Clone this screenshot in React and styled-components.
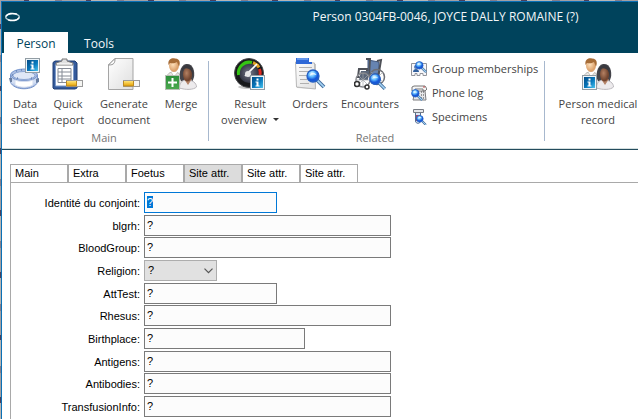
import React, { useEffect, useRef, useState } from "react";
import styled, { createGlobalStyle } from "styled-components";

const GlobalStyle = createGlobalStyle`
  * { box-sizing: border-box; }
  body { margin: 0; background: #9b9b9f; overflow: hidden; }
  button, input, select { font: inherit; color: inherit; margin: 0; }
`;

const Desktop = styled.div`
  display: flex;
  min-height: 100vh;
  padding: 1px 0 0 1px;
  background: repeating-linear-gradient(135deg, #a3a0a4 0 17px, #4c405b 17px 21px, #b8b5b4 21px 39px, #857e8c 39px 44px);
`;

const Window = styled.div`
  display: flex;
  flex-direction: column;
  flex: 1;
  min-width: 0;
  overflow: hidden;
  background: #fff;
  border: 1px solid #0a70b5;
  border-width: 1px 0 0 1px;
`;

const Header = styled.header`
  background: #00435c;
  color: #f3f7f9;
  font: 12px/16px "Open Sans", "Noto Sans", sans-serif;
`;

const TitleBar = styled.div`
  display: flex;
  align-items: center;
  height: 30px;
  padding-left: 2px;
`;

const Title = styled.h1`
  flex: 1;
  margin: 0;
  padding-left: 232px;
  font: inherit;
  text-align: center;
  white-space: nowrap;
`;

const RibbonTabs = styled.div`
  display: flex;
  height: 21px;
  padding-left: 2px;
`;

const RibbonTab = styled.button`
  width: ${(p) => (p.$active ? 64 : 62)}px;
  padding: 2px 0 0;
  border: 0;
  background: ${(p) => (p.$active ? "#fff" : "transparent")};
  color: ${(p) => (p.$active ? "#00435c" : "#f3f7f9")};
`;

const Ribbon = styled.div`
  display: flex;
  height: 97px;
  padding: 4px 0 0 2px;
  border-bottom: 1px solid #234c5d;
  box-shadow: inset 0 -1px #d5dfdf;
  background: #fff;
  color: #444;
  font: 11px/16px "Open Sans", "Noto Sans", sans-serif;
`;

const Group = styled.section`
  display: flex;
  flex: none;
  flex-direction: column;
`;

const Separator = styled.div`
  flex: none;
  width: 1px;
  height: 80px;
  margin-top: 4px;
  margin-left: ${(p) => p.$space}px;
  background: #a7b8ce;
`;

const GroupItems = styled.div`
  display: flex;
  height: 73px;
`;

const GroupLabel = styled.div`
  color: #747474;
  text-align: center;
`;

const LargeButton = styled.button`
  display: flex;
  flex-direction: column;
  align-items: center;
  flex: none;
  width: ${(p) => p.$width}px;
  padding: 1px 0 0;
  border: 0;
  background: transparent;
  white-space: nowrap;
  svg { flex: none; margin-bottom: 6px; }
`;

const ArrowLine = styled.span`
  display: flex;
  align-items: center;
  gap: 6px;
  svg { margin: 0; }
`;

const SmallButtons = styled.div`
  display: flex;
  flex-direction: column;
  width: 130px;
`;

const SmallButton = styled.button`
  display: flex;
  align-items: center;
  gap: 5px;
  height: 24px;
  padding: 0;
  border: 0;
  background: transparent;
  white-space: nowrap;
  svg { flex: none; }
`;

const Content = styled.main`
  display: flex;
  flex-direction: column;
  flex: 1;
  padding: 14px 0 0 8px;
  color: #000;
  font: 11px/13px "Liberation Sans", Arial, sans-serif;
`;

const PageTabs = styled.div`
  display: flex;
  height: 18px;
`;

const PageTab = styled.button`
  width: 58px;
  padding: 0 4px;
  border: 1px solid #a9a9a9;
  border-bottom: 0;
  background: ${(p) => (p.$selected ? "#dcdcdc" : "#fff")};
  text-align: left;
  white-space: nowrap;
`;

const Panel = styled.div`
  flex: 1;
  padding: 9px 0 0;
  border: 1px solid #a9a9a9;
  border-width: 1px 0 0 1px;
`;

const Form = styled.form`
  display: grid;
  grid-auto-rows: 23px 22px 23px;
`;

const Field = styled.div`
  display: flex;
  align-items: center;
  height: 21px;
`;

const Label = styled.label`
  flex: none;
  width: 129px;
  margin-right: 4px;
  padding-top: 2px;
  text-align: right;
  white-space: nowrap;
`;

const sizes = { short: 133, medium: 161, long: 247 };

const TextInput = styled.input`
  width: ${(p) => sizes[p.$size]}px;
  height: 21px;
  padding: 0 2px 2px;
  border: 1px solid #7a7a7a;
  border-radius: 0;
  outline: 0;
  background: #fcfcfc;
  &:focus { border-color: #0078d7; }
  &::selection { background: #0078d7; color: #fff; }
`;

const SelectBox = styled.div`
  display: grid;
  width: 73px;
  height: 21px;
  svg { grid-area: 1 / 1; place-self: center end; margin-right: 4px; pointer-events: none; }
`;

const Select = styled.select`
  grid-area: 1 / 1;
  appearance: none;
  padding: 0 3px;
  border: 1px solid #adadad;
  border-radius: 0;
  background: #e1e1e1;
`;

const Logo = () => (
  <svg width="17" height="12" viewBox="0 0 17 12" fill="none" aria-hidden="true">
    <ellipse cx="8.5" cy="6" rx="6.8" ry="3.3" stroke="#b8d0d9" strokeWidth="1.4" />
    <path d="M2 5.5C3.5 2 9 1.7 13 3.2M15 6.5c-1.5 3.5-7 3.8-11 2.3" stroke="#fff" strokeWidth="1.4" />
  </svg>
);

const Defs = () => (
  <svg width="0" height="0" aria-hidden="true" display="block">
    <defs>
      <linearGradient id="blue" x2="1" y2="1"><stop stopColor="#034b86" /><stop offset=".55" stopColor="#0879bd" /><stop offset="1" stopColor="#48c3ee" /></linearGradient>
      <linearGradient id="green" x2="0" y2="1"><stop stopColor="#2c8f3a" /><stop offset="1" stopColor="#4ba84e" /></linearGradient>
      <linearGradient id="paper" x2="1" y2="1"><stop stopColor="#fff" /><stop offset="1" stopColor="#dedede" /></linearGradient>
      <linearGradient id="gold" x2="0" y2="1"><stop stopColor="#ffe478" /><stop offset="1" stopColor="#e5a000" /></linearGradient>
      <linearGradient id="band" x2="0" y2="1"><stop stopColor="#9fb5df" /><stop offset=".5" stopColor="#dce6f8" /><stop offset="1" stopColor="#7f9bd0" /></linearGradient>
      <radialGradient id="lens" cx=".4" cy=".3"><stop stopColor="#e9faff" /><stop offset=".55" stopColor="#5bb8ff" /><stop offset="1" stopColor="#1759d8" /></radialGradient>
      <radialGradient id="skin" cx=".4" cy=".4"><stop stopColor="#ffe2bd" /><stop offset="1" stopColor="#dca26d" /></radialGradient>
      <radialGradient id="brown" cx=".4" cy=".4"><stop stopColor="#b48163" /><stop offset="1" stopColor="#734630" /></radialGradient>
      <radialGradient id="dial"><stop stopColor="#77798a" /><stop offset="1" stopColor="#303342" /></radialGradient>
    </defs>
  </svg>
);

const Picture = ({ children, size = 32 }) => (
  <svg width={size} height={size} viewBox={`0 0 ${size} ${size}`} fill="none" aria-hidden="true">{children}</svg>
);

const InfoMark = ({ x, y }) => (
  <g transform={`translate(${x} ${y})`}>
    <rect x=".5" y=".5" width="14" height="14" fill="#eef5f9" stroke="#929da4" />
    <rect x="2" y="2" width="11" height="11" fill="url(#blue)" />
    <path d="M6.5 3.5h2v2h-2zM5.5 6.5h3v4h1v1h-4v-1h1v-3h-1z" fill="#fff" />
  </g>
);

const Pencil = ({ x, y }) => (
  <g transform={`translate(${x} ${y})`}>
    <rect x=".5" y=".5" width="16" height="6" fill="#f5f5f2" stroke="#9a9a9a" />
    <rect x="1" y="1" width="9" height="5" fill="url(#gold)" />
    <path d="M.5 1v5h10V1" stroke="#bd8a22" />
  </g>
);

const Magnifier = ({ x, y, s = 1 }) => (
  <g transform={`translate(${x} ${y}) scale(${s})`}>
    <path d="m11 11 7 7" stroke="#4771a0" strokeWidth="3.8" />
    <path d="m11 11 7 7" stroke="#a5d5f5" strokeWidth="1.7" />
    <circle cx="7" cy="7" r="6" fill="url(#lens)" stroke="#245fc4" strokeWidth="1.3" />
    <path d="M3.5 7c1.5-4 5-4 7-1-3-1-5-.5-7 1z" fill="#f3fcff" opacity=".8" />
  </g>
);

const SheetIcon = () => (
  <Picture>
    <ellipse cx="15" cy="17" rx="13.5" ry="6" fill="#aabde2" stroke="#7797d0" />
    <path d="M1.5 17v7c3 9 24 9 27 0v-7c-3 8-24 8-27 0z" fill="url(#band)" stroke="#7895cb" />
    <ellipse cx="15" cy="17.5" rx="11" ry="4" fill="#dfe7f7" stroke="#8ba5d3" />
    <path d="M6 22c5 2 13 2 18 0v5c-5 3-13 3-18 0z" fill="#fff" stroke="#d4ddef" />
    <path d="M0 20h3v4H1zM27 21l3-1v4l-3 1z" fill="#687d9f" />
    <path d="M7 13h1M12 12h1M3 17h1M8 20h1M22 20h1" stroke="#4466a0" />
    <InfoMark x={16} y={0} />
  </Picture>
);

const ReportIcon = () => (
  <Picture>
    <path d="M1 4.5 3 3h20l2 2v25l-2 1H2l-1-1z" fill="#355b9c" stroke="#203f74" />
    <path d="M3.5 6h18v22h-18z" fill="#fff" stroke="#7e9bc9" />
    <path d="M6 10.5h13v14H6zM6 14h13M6 18h13M6 21h13M10 10v15" stroke="#858b95" />
    <path d="M4 7V5l6-2V1h5v2l6 2v2z" fill="#e1e1e1" stroke="#777" />
    <path d="M5 6h15" stroke="#fff" />
    <Pencil x={14} y={22} />
  </Picture>
);

const DocumentIcon = () => (
  <Picture>
    <path d="M7 .5h18v31H.5V7z" fill="url(#paper)" stroke="#a5a5a5" />
    <path d="M.5 7C6 7 7 5 7 .5L.5 7z" fill="#fff" stroke="#929292" />
    <Pencil x={15} y={22} />
  </Picture>
);

const PeopleIcon = ({ info }) => (
  <Picture>
    <path d="M1 22c1-7 4-8 8-8s7 2 9 8v8H1z" fill="#e7e5e2" stroke="#bbb9b6" />
    <path d="m6 14 3 5 4-5" fill="#fff" stroke="#c9c6c0" />
    <ellipse cx="9" cy="7.5" rx="5" ry="6.5" fill="url(#skin)" />
    <path d="M3.5 7C2.5 1 7-.5 10 .5c4 0 6 3 4 8L12 4c-3 2-6 1-7 1z" fill="#a66c37" />
    <path d="M16 23C13 18 15 7 21 6c7-1 9 7 8 13l-2 6z" fill="#44444a" />
    <path d="M14.5 30c0-7 4-8 8-8 5 0 9 3 9 7-3 3-11 3-17 1z" fill="#edebed" stroke="#bbb8bd" />
    <path d="m19 21 4 6 4-6" fill="#b38267" />
    <ellipse cx="22.5" cy="16.5" rx="4.5" ry="7" fill="url(#brown)" />
    <path d="M17 14c1-5 5-4 7-3 4 2 3 6 3 8 2-5 1-11-4-12-5 0-7 4-6 7z" fill="#39393f" />
    {info ? <InfoMark x={0} y={17} /> : (
      <g transform="translate(0 17)">
        <rect x=".5" y=".5" width="14" height="14" fill="url(#green)" stroke="#b7bfb5" />
        <path d="M7.5 3v9M3 7.5h9" stroke="#fff" strokeWidth="2" />
      </g>
    )}
  </Picture>
);

const GaugeIcon = () => (
  <Picture>
    <ellipse cx="15" cy="29" rx="11" ry="2" fill="#ccc" />
    <circle cx="15" cy="15" r="14.5" fill="#18191c" stroke="#4a4b4e" />
    <circle cx="15" cy="15" r="10" fill="url(#dial)" />
    <path d="M4.5 17A11 11 0 0 1 18 4.5" stroke="#35c414" strokeWidth="3" />
    <path d="M19 4.8A11 11 0 0 1 25 9.5" stroke="#e3a323" strokeWidth="3" />
    <path d="M25.5 11A11 11 0 0 1 26 17" stroke="#de2820" strokeWidth="3" />
    <path d="m11 18 12-12" stroke="#fff" strokeWidth="1.6" />
    <circle cx="14" cy="16" r="3" fill="#e5e5e7" />
    <InfoMark x={16} y={17} />
  </Picture>
);

const OrdersIcon = () => (
  <Picture>
    <path d="m2 5 1 25 19 1V6z" fill="#c7c7c7" />
    <path d="m1.5 4 1 25 19 2-1-26z" fill="url(#paper)" stroke="#b8b8b8" />
    <path d="M2 0h13v4h3v2H2z" fill="#2f69d7" />
    <path d="M3 1h11" stroke="#9ac5ff" />
    <path d="M5 9.5h13M5 13.5h12M5 17.5h8M6 21.5h7M6 25.5h9" stroke="#b0b0b0" />
    <Magnifier x={12} y={11} />
  </Picture>
);

const EncounterIcon = () => (
  <Picture>
    <path d="m14 2 11 2v12H14z" fill="#6684b1" stroke="#40577f" />
    <path d="M12 1h4l-1 17M23 3l4-1-3 18M5 11h8v8H4z" stroke="#4e5158" strokeWidth="2" />
    <path d="M7 13h8l-1 9H5z" fill="#596679" />
    <circle cx="23" cy="19" r="7.5" stroke="#6d6f75" strokeWidth="1.5" />
    <circle cx="9" cy="22" r="7" stroke="#85878c" strokeWidth="1.5" />
    <path d="M9 15v14M2 22h14M4 17l10 10M14 17 4 27M17 14l12 10M29 14 17 26" stroke="#a4a6aa" strokeWidth=".7" />
    <circle cx="3" cy="26" r="2.5" fill="#fff" stroke="#333" strokeWidth="1.6" />
    <circle cx="13" cy="29" r="2" fill="#fff" stroke="#333" strokeWidth="1.5" />
    <Magnifier x={15} y={15} s={0.88} />
  </Picture>
);

const GroupIcon = () => (
  <Picture size={16}>
    <path d="M.5 2.5h15v12H12v-2H9v2H6v-2H4v2H.5z" fill="#f7f7fa" stroke="#92949b" />
    <circle cx="5" cy="6" r="2" fill="#537fb8" /><path d="M2 11c0-4 6-4 6 0z" fill="#315f9d" />
    <Magnifier x={4} y={0} s={0.62} />
  </Picture>
);

const PhoneIcon = () => (
  <Picture size={16}>
    <path d="M1 2 3 1h11l2 3-2 2h-2V4H4v2H1z" fill="#f6f6f6" stroke="#777" />
    <path d="M4 6h10l1 9H2z" fill="#e8e8ea" stroke="#7c7c7f" />
    <path d="M10 7h1m1 0h1m-3 3h1m1 0h1m-3 3h1m1 0h1" stroke="#444" />
    <path d="M12 2h2" stroke="#c44948" />
    <Magnifier x={0} y={4} s={0.62} />
  </Picture>
);

const SpecimenIcon = () => (
  <Picture size={16}>
    <path d="M4.500 3h5v9c0 3-5 3-5 0z" fill="#dce8f5" stroke="#536d91" />
    <path d="M5 6h4v6H5z" fill="#a94c69" />
    <path d="M2.500.5h10v3h-10z" fill="#e6e7ea" stroke="#777b83" />
    <Magnifier x={5} y={6} s={0.55} />
  </Picture>
);

const pageTabs = ["Main", "Extra", "Foetus", "Site attr.", "Site attr.", "Site attr."];

const fields = [
  { id: "partner", label: "Identité du conjoint:", size: "short" },
  { id: "blgrh", label: "blgrh:", size: "long" },
  { id: "bloodgroup", label: "BloodGroup:", size: "long" },
  { id: "religion", label: "Religion:", select: true },
  { id: "atttest", label: "AttTest:", size: "short" },
  { id: "rhesus", label: "Rhesus:", size: "long" },
  { id: "birthplace", label: "Birthplace:", size: "medium" },
  { id: "antigens", label: "Antigens:", size: "long" },
  { id: "antibodies", label: "Antibodies:", size: "long" },
  { id: "transfusion", label: "TransfusionInfo:", size: "long" },
];

export default function App() {
  const first = useRef(null);
  const [tab, setTab] = useState(3);

  useEffect(() => {
    first.current.focus();
    first.current.select();
  }, []);

  return (
    <Desktop>
      <GlobalStyle />
      <Window>
        <Header>
          <Defs />
          <TitleBar>
            <Logo />
            <Title>Person 0304FB-0046, JOYCE DALLY ROMAINE (?)</Title>
          </TitleBar>
          <RibbonTabs role="tablist">
            <RibbonTab role="tab" aria-selected="true" $active>Person</RibbonTab>
            <RibbonTab role="tab" aria-selected="false">Tools</RibbonTab>
          </RibbonTabs>
        </Header>
        <Ribbon>
          <Group>
            <GroupItems>
              <LargeButton $width={42}><SheetIcon />Data<br />sheet</LargeButton>
              <LargeButton $width={44}><ReportIcon />Quick<br />report</LargeButton>
              <LargeButton $width={68}><DocumentIcon />Generate<br />document</LargeButton>
              <LargeButton $width={46}><PeopleIcon />Merge</LargeButton>
            </GroupItems>
            <GroupLabel>Main</GroupLabel>
          </Group>
          <Separator $space={4} />
          <Group>
            <GroupItems>
              <LargeButton $width={82}>
                <GaugeIcon />
                Result
                <ArrowLine>
                  overview
                  <svg width="6" height="4" viewBox="0 0 6 4" aria-hidden="true"><path d="M0 0h6L3 3z" fill="#333" /></svg>
                </ArrowLine>
              </LargeButton>
              <LargeButton $width={38}><OrdersIcon />Orders</LargeButton>
              <LargeButton $width={82}><EncounterIcon />Encounters</LargeButton>
              <SmallButtons>
                <SmallButton><GroupIcon />Group memberships</SmallButton>
                <SmallButton><PhoneIcon />Phone log</SmallButton>
                <SmallButton><SpecimenIcon />Specimens</SmallButton>
              </SmallButtons>
            </GroupItems>
            <GroupLabel>Related</GroupLabel>
          </Group>
          <Separator $space={3} />
          <Group>
            <GroupItems>
              <LargeButton $width={106}><PeopleIcon info />Person medical<br />record</LargeButton>
            </GroupItems>
          </Group>
        </Ribbon>
        <Content>
          <PageTabs role="tablist">
            {pageTabs.map((name, i) => (
              <PageTab key={i} type="button" role="tab" aria-selected={i === tab} $selected={i === tab} onClick={() => setTab(i)}>{name}</PageTab>
            ))}
          </PageTabs>
          <Panel>
            <Form>
              {fields.map((f, i) => (
                <Field key={f.id}>
                  <Label htmlFor={f.id}>{f.label}</Label>
                  {f.select ? (
                    <SelectBox>
                      <Select id={f.id}><option>?</option></Select>
                      <svg width="9" height="6" viewBox="0 0 9 6" fill="none" aria-hidden="true"><path d="m.5.7 4 4 4-4" stroke="#555" strokeWidth="1.2" /></svg>
                    </SelectBox>
                  ) : (
                    <TextInput id={f.id} ref={i === 0 ? first : undefined} $size={f.size} defaultValue="?" />
                  )}
                </Field>
              ))}
            </Form>
          </Panel>
        </Content>
      </Window>
    </Desktop>
  );
}
